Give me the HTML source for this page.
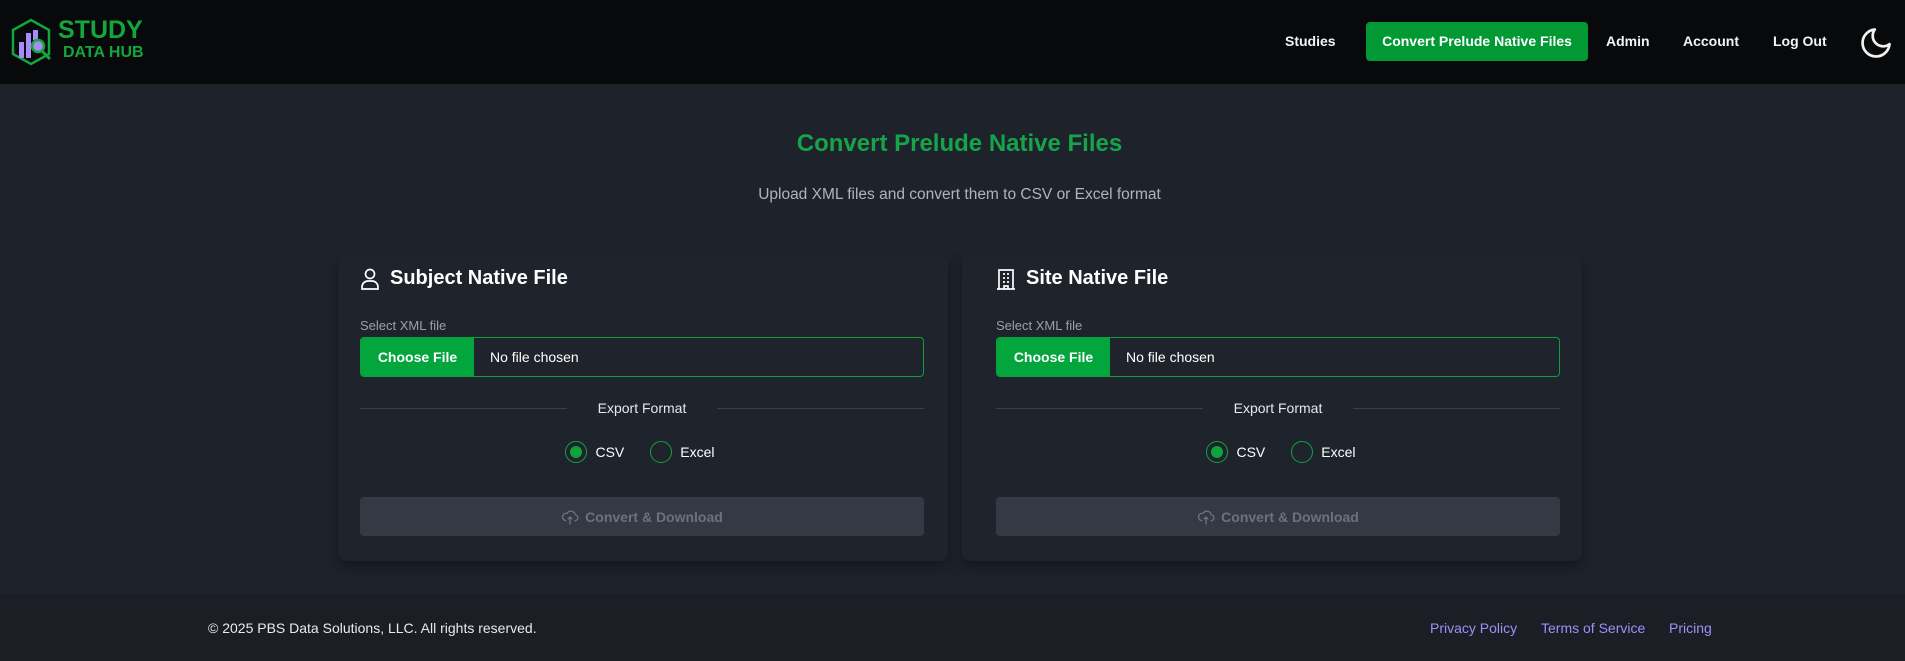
<!DOCTYPE html>
<html><head><meta charset="utf-8"><style>
*{box-sizing:border-box;margin:0;padding:0}
body{width:1905px;height:661px;background:#1e232b;font-family:"Liberation Sans",Arial,sans-serif;color:#fff;position:relative;overflow:hidden}
.abs{position:absolute}
header{position:absolute;left:0;top:0;width:1905px;height:84px;background:#08090b}
.nav{position:absolute;top:33px;font-size:14px;font-weight:bold;color:#f1f3f5}
.navbtn{position:absolute;left:1366px;top:22px;width:222px;height:39px;background:#019934;border-radius:4px;font-size:14px;font-weight:bold;text-align:center;line-height:39px}
.card{position:absolute;top:255px;height:306px;background:#1f232b;border-radius:8px;box-shadow:0 6px 14px rgba(0,0,0,.35)}
.ct{position:absolute;left:22px;top:12px;font-size:20px;font-weight:bold;display:flex;align-items:center;gap:10px}
.lbl{position:absolute;left:22px;top:63px;font-size:13px;color:#9aa1ab}
.file{position:absolute;left:22px;top:82px;width:564px;height:40px;border:1px solid #0e9f3c;border-radius:4px;overflow:hidden;display:flex;align-items:center;font-size:14px}
.file b{display:block;width:113px;height:100%;background:#03a63c;line-height:38px;text-align:center;font-size:14px}
.file span{margin-left:16px}
.div{position:absolute;left:22px;top:153px;width:564px;height:1px}
.div:before,.div:after{content:"";position:absolute;top:0;height:1px;width:207px;background:#3a404a}
.div:before{left:0}.div:after{right:0}
.div span{position:absolute;left:0;right:0;top:-8px;text-align:center;font-size:14px;color:#e6e8eb}
.radios{position:absolute;left:-6px;right:0;top:186px;display:flex;justify-content:center;gap:0;font-size:14px;align-items:center}
.r{width:22px;height:22px;border:1px solid #13a33f;border-radius:50%;display:inline-block;position:relative;margin-right:8px}
.r.on:after{content:"";position:absolute;left:4px;top:4px;width:12px;height:12px;border-radius:50%;background:#0ea33b}
.btn{position:absolute;left:22px;top:242px;width:564px;height:39px;background:#343a44;border-radius:4px;color:#6b727c;font-weight:bold;font-size:14px;display:flex;align-items:center;justify-content:center;gap:6px}
footer{position:absolute;left:0;top:593px;width:1905px;height:68px;background:#1b1e25;font-size:14px}
footer a{position:absolute;top:27px;color:#a48cf7;text-decoration:none}
</style></head><body>
<header>
<svg class="abs" style="left:8px;top:18px" width="46" height="48" viewBox="0 0 44 48">
<path d="M22 2 L40 12 L40 36 L22 46 L4 36 L4 12 Z" fill="none" stroke="#14a63c" stroke-width="2.5"/>
<rect x="10" y="24" width="5" height="16" fill="#a78bfa"/><rect x="17" y="15" width="5" height="25" fill="#a78bfa"/><rect x="24" y="12" width="5" height="10" fill="#a78bfa"/>
<circle cx="29" cy="28" r="6" fill="#a78bfa" stroke="#14a63c" stroke-width="2.5"/><path d="M33 33 L41 41" stroke="#14a63c" stroke-width="3"/>
</svg>
<div class="abs" style="left:58px;top:17px;font-size:25px;font-weight:bold;color:#14a63c;line-height:26px">STUDY</div>
<div class="abs" style="left:63px;top:44px;font-size:16px;font-weight:bold;color:#14a63c;line-height:18px">DATA HUB</div>
<div class="nav" style="left:1285px">Studies</div>
<div class="navbtn">Convert Prelude Native Files</div>
<div class="nav" style="left:1606px">Admin</div>
<div class="nav" style="left:1683px">Account</div>
<div class="nav" style="left:1773px">Log Out</div>
<svg class="abs" style="left:1858px;top:25px" width="36" height="36" viewBox="0 0 24 24"><path d="M21 12.8A9 9 0 1 1 11.2 3a7 7 0 0 0 9.8 9.8z" fill="none" stroke="#f1f1f1" stroke-width="1.8" stroke-linejoin="round"/></svg>
</header>
<div class="abs" style="left:7px;width:1905px;top:130px;text-align:center;font-size:24px;font-weight:bold;color:#16a34a">Convert Prelude Native Files</div>
<div class="abs" style="left:7px;width:1905px;top:186px;text-align:center;font-size:15.5px;color:#aeb4bd">Upload XML files and convert them to CSV or Excel format</div>

<div class="card" style="left:338px;width:610px">
<div class="ct"><svg width="20" height="22" viewBox="0 0 20 22" fill="none" stroke="#fff" stroke-width="1.7"><circle cx="10" cy="6" r="4.5"/><path d="M2 21v-2a6 6 0 0 1 6-6h4a6 6 0 0 1 6 6v2z"/></svg>Subject Native File</div>
<div class="lbl">Select XML file</div>
<div class="file"><b>Choose File</b><span>No file chosen</span></div>
<div class="div"><span>Export Format</span></div>
<div class="radios"><span class="r on"></span>CSV<span style="width:26px"></span><span class="r"></span>Excel</div>
<div class="btn"><svg width="18" height="18" viewBox="0 0 24 24" fill="none" stroke="#6b727c" stroke-width="1.8"><path d="M7 17a5 5 0 1 1 1-9.9A6 6 0 0 1 19 9a4 4 0 0 1-1 8M12 12v10M9 15l3-3 3 3"/></svg>Convert &amp; Download</div>
</div>

<div class="card" style="left:962px;width:620px">
<div class="ct" style="left:34px"><svg width="20" height="22" viewBox="0 0 20 22" fill="none" stroke="#fff" stroke-width="1.7"><path d="M3 21V2h14v19M1 21h18M7 6h2M11 6h2M7 10h2M11 10h2M7 14h2M11 14h2M8 21v-3h4v3"/></svg>Site Native File</div>
<div class="lbl" style="left:34px">Select XML file</div>
<div class="file" style="left:34px"><b>Choose File</b><span>No file chosen</span></div>
<div class="div" style="left:34px"><span>Export Format</span></div>
<div class="radios" style="left:18px"><span class="r on"></span>CSV<span style="width:26px"></span><span class="r"></span>Excel</div>
<div class="btn" style="left:34px"><svg width="18" height="18" viewBox="0 0 24 24" fill="none" stroke="#6b727c" stroke-width="1.8"><path d="M7 17a5 5 0 1 1 1-9.9A6 6 0 0 1 19 9a4 4 0 0 1-1 8M12 12v10M9 15l3-3 3 3"/></svg>Convert &amp; Download</div>
</div>

<footer>
<div class="abs" style="left:208px;top:27px;color:#e8eaed">© 2025 PBS Data Solutions, LLC. All rights reserved.</div>
<a style="left:1430px">Privacy Policy</a>
<a style="left:1541px">Terms of Service</a>
<a style="left:1669px">Pricing</a>
</footer>
</body></html>
